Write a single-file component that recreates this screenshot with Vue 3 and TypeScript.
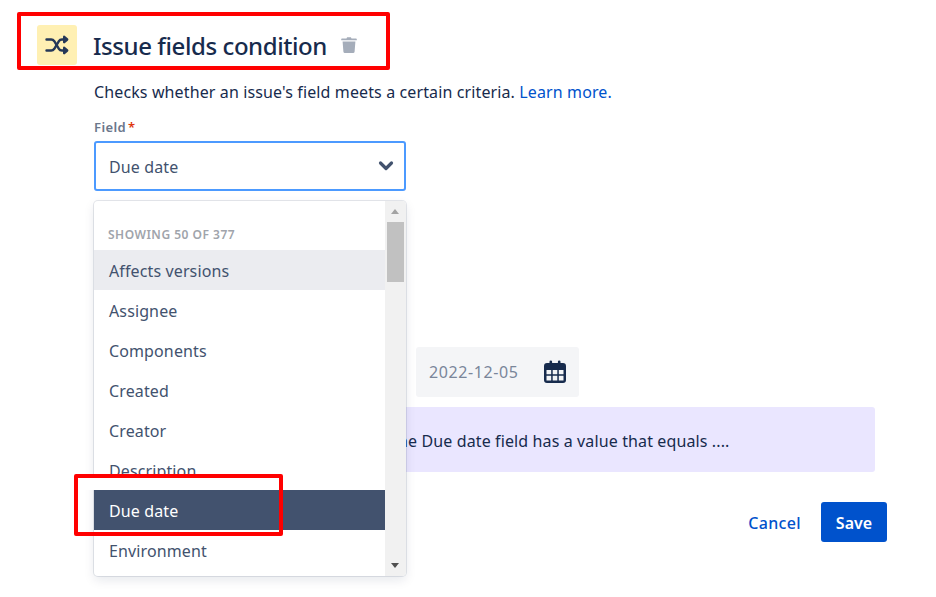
<script setup lang="ts">
const options = ['Affects versions', 'Assignee', 'Components', 'Created', 'Creator', 'Description', 'Due date', 'Environment']
const selected = 'Due date'
const focused = 'Affects versions'
</script>

<template>
  <div class="page">
    <header class="head">
      <span class="rule-icon">
        <svg width="24" height="24" viewBox="0 0 24 24" fill="none" stroke="#253858" stroke-width="2.400" stroke-linecap="round" stroke-linejoin="round">
          <path d="M1.500 6.500h4.700c1.400 0 2.300.6 3.100 1.700l4.600 7.600c.7 1.200 1.700 1.700 3.100 1.700h3" />
          <path d="M1.500 17.500h4.700c1.400 0 2.300-.6 3.100-1.700l4.600-7.600c.7-1.200 1.700-1.700 3.100-1.700h3" />
          <path fill="#253858" d="M19.200 3.800l3 2.700-3 2.700zM19.200 14.800l3 2.700-3 2.700z" />
        </svg>
      </span>
      <h1>Issue fields condition</h1>
      <svg class="trash" width="24" height="24" viewBox="0 0 24 24" fill="#a5adba">
        <path d="M5 5.500h4.500l.6-1.200h3.800l.6 1.200H19a.8.8 0 0 1 .8.8v.9H4.200v-.9a.8.8 0 0 1 .8-.8z" />
        <path d="M5.600 8.600h12.800l-.8 10.100a1.500 1.500 0 0 1-1.500 1.300H7.900a1.500 1.500 0 0 1-1.500-1.300z" />
      </svg>
    </header>

    <main class="body">
      <p class="desc">Checks whether an issue's field meets a certain criteria. <a>Learn more.</a></p>
      <label class="label">Field<span class="req">*</span></label>
      <div class="select">
        <span>Due date</span>
        <svg width="24" height="24" viewBox="0 0 24 24" fill="none" stroke="#42526e" stroke-width="3.200" stroke-linecap="round" stroke-linejoin="round">
          <path d="M6.500 9l5.500 5.500L17.500 9" />
        </svg>
      </div>

      <div class="date-row">
        <div class="date">
          <span>2022-12-05</span>
          <svg width="24" height="24" viewBox="0 0 24 24">
            <path fill="#172b4d" d="M4 3h2.500V1.800a1.300 1.300 0 0 1 2.600 0V3h5.800V1.800a1.300 1.300 0 0 1 2.600 0V3H20a3 3 0 0 1 3 3v14a3 3 0 0 1-3 3H4a3 3 0 0 1-3-3V6a3 3 0 0 1 3-3z" />
            <path fill="#f4f5f7" d="M3.500 10h4.700v4.200H3.500zM9.700 10h4.600v4.200H9.700zM15.800 10h4.700v4.200h-4.700zM3.500 15.700h4.700v4.800H3.500zM9.700 15.700h4.600v4.800H9.700zM15.800 15.700h4.700v4.800h-4.700z" />
          </svg>
        </div>
      </div>

      <div class="note">The Due date field has a value that equals ....</div>

      <footer class="actions">
        <a class="cancel">Cancel</a>
        <button class="save">Save</button>
      </footer>
    </main>

    <div class="menu">
      <div class="menu-list">
        <div class="menu-title">SHOWING 50 OF 377</div>
        <div
          v-for="opt in options"
          :key="opt"
          class="option"
          :class="{ focused: opt === focused, selected: opt === selected }"
        >
          {{ opt }}
        </div>
      </div>
      <div class="scrollbar">
        <span class="arrow up"></span>
        <span class="thumb"></span>
        <span class="arrow down"></span>
      </div>
    </div>

    <div class="mark mark-head"></div>
    <div class="mark mark-item"></div>
  </div>
</template>

<style scoped>
.page {
  position: relative;
  width: 936px;
  height: 597px;
  overflow: hidden;
  background: #fff;
  color: #172b4d;
  font-family: "Noto Sans", "Open Sans", sans-serif;
  font-size: 16px;
  letter-spacing: 0.12px;
}
.head {
  display: flex;
  align-items: center;
  height: 40px;
  padding: 25px 0 0 37px;
}
.rule-icon {
  display: flex;
  align-items: center;
  justify-content: center;
  width: 40px;
  height: 40px;
  border-radius: 3px;
  background: #fff0b3;
}
h1 {
  margin: 2px 0 0 16px;
  font-size: 24px;
  line-height: 40px;
  font-weight: 500;
  letter-spacing: -0.42px;
  color: #172b4d;
}
.trash {
  margin: -1px 0 0 10px;
}
.body {
  padding-left: 94px;
}
.desc {
  margin: 15px 0 0;
  font-size: 16px;
  line-height: 24px;
}
.desc a {
  color: #0052cc;
}
.label {
  display: block;
  margin-top: 15px;
  height: 16px;
  font-size: 13px;
  line-height: 16px;
  font-weight: 600;
  letter-spacing: 0.4px;
  color: #6b778c;
}
.req {
  margin-left: 2px;
  color: #de350b;
}
.select {
  box-sizing: border-box;
  display: flex;
  align-items: center;
  justify-content: space-between;
  width: 312px;
  height: 50px;
  margin-top: 6px;
  padding: 1px 6px 0 13px;
  border: 2px solid #4c9aff;
  border-radius: 3px;
  color: #42526e;
}
.select svg {
  margin-top: -2px;
}
.date-row {
  display: flex;
  margin: 156px 0 0 322px;
}
.date {
  box-sizing: border-box;
  display: flex;
  align-items: center;
  justify-content: space-between;
  width: 163px;
  height: 50px;
  padding: 0 12px 0 13px;
  border-radius: 3px;
  background: #f4f5f7;
  color: #7a869a;
  letter-spacing: 0.6px;
}
.note {
  box-sizing: border-box;
  width: 781px;
  height: 65px;
  margin-top: 10px;
  padding: 22px 0 0 295px;
  border-radius: 3px;
  background: #eae6ff;
  line-height: 24px;
}
.actions {
  display: flex;
  align-items: center;
  justify-content: flex-end;
  width: 793px;
  margin-top: 30px;
}
.cancel {
  margin: 1px 20px 0 0;
  font-weight: 500;
  letter-spacing: 0.35px;
  color: #0052cc;
}
.save {
  width: 66px;
  height: 40px;
  padding: 2px 0 0;
  border: 0;
  border-radius: 3px;
  background: #0052cc;
  color: #fff;
  font: 600 16px "Noto Sans", "Open Sans", sans-serif;
}
.menu {
  position: absolute;
  left: 94px;
  top: 201px;
  display: flex;
  width: 312px;
  height: 375px;
  overflow: hidden;
  border-radius: 4px;
  background: #fff;
  box-shadow: 0 0 0 1px rgba(9, 30, 66, 0.1), 0 4px 11px rgba(9, 30, 66, 0.1);
}
.menu-list {
  flex: 1;
  min-width: 0;
}
.menu-title {
  height: 49px;
  padding: 26px 0 0 14px;
  box-sizing: border-box;
  font-size: 12px;
  line-height: 16px;
  font-weight: 600;
  letter-spacing: 0.5px;
  color: #a0a4ab;
}
.option {
  height: 40px;
  padding: 1px 0 0 15px;
  box-sizing: border-box;
  line-height: 40px;
  color: #42526e;
}
.option.focused {
  background: #ebecf0;
}
.option.selected {
  background: #42526e;
  color: #fff;
}
.scrollbar {
  position: relative;
  width: 21px;
  background: #f1f1f1;
}
.thumb {
  position: absolute;
  left: 2px;
  top: 21px;
  width: 17px;
  height: 60px;
  background: #c1c1c1;
}
.arrow {
  position: absolute;
  left: 6px;
  width: 0;
  height: 0;
  border-left: 4.500px solid transparent;
  border-right: 4.500px solid transparent;
}
.arrow.up {
  top: 8px;
  border-bottom: 5px solid #a3a3a3;
}
.arrow.down {
  bottom: 8px;
  border-top: 5px solid #505050;
}
.mark {
  position: absolute;
  box-sizing: border-box;
  border: 4px solid #f00;
  border-radius: 2px;
}
.mark-head {
  left: 17px;
  top: 12px;
  width: 373px;
  height: 58px;
}
.mark-item {
  left: 74px;
  top: 474px;
  width: 209px;
  height: 62px;
  background: linear-gradient(#fff 12px, transparent 12px);
}
</style>
